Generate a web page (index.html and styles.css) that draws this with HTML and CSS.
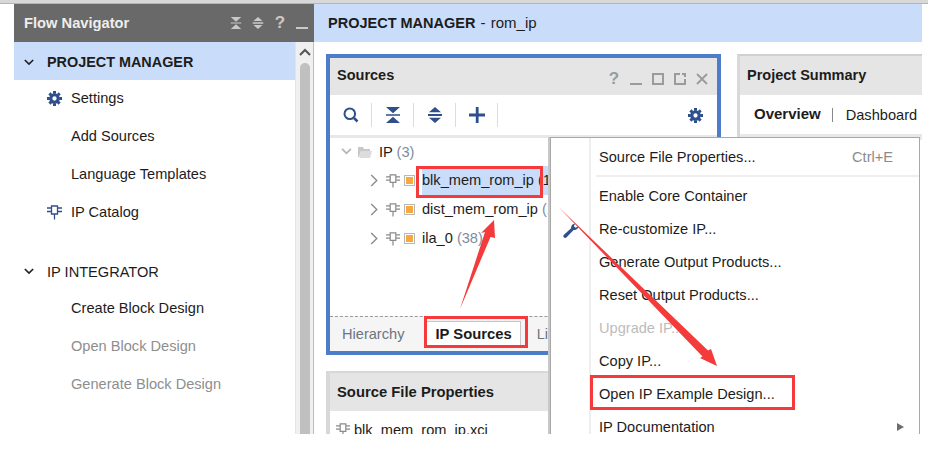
FILE: index.html
```html
<!DOCTYPE html>
<html lang="en">
<head>
    <meta charset="UTF-8">
    <title>PROJECT MANAGER - rom_ip</title>
    <link rel="stylesheet" href="styles.css">
</head>
<body>
    <!-- shared icons -->
    <svg class="defs" width="0" height="0">
        <symbol id="i-gear" viewBox="0 0 16 16">
            <g fill="currentColor">
                <path fill-rule="evenodd" d="M8 2.4a5.6 5.6 0 1 0 0 11.2 5.6 5.6 0 0 0 0-11.2zM8 5.7a2.3 2.3 0 1 1 0 4.6 2.3 2.3 0 0 1 0-4.6z"/>
                <path d="M6.4 0h3.2v3H6.4zM6.4 13h3.2v3H6.4zM0 6.4h3v3.2H0zM13 6.4h3v3.2h-3zM1.4 3.7l2.3-2.3 2 2-2.3 2.3zM10.3 12.6l2.3-2.3 2 2-2.3 2.3zM12.6 1.4l2 2.3-2 2-2.3-2.3zM3.4 10.3l2.3 2.3-2 2-2.3-2.3z"/>
            </g>
        </symbol>
        <symbol id="i-chip" viewBox="0 0 15 15">
            <g fill="none" stroke="currentColor" stroke-width="1.3">
                <path d="M4.5 1h6v8h-6zM0 3h4.500M0 6.500h4.500M10.500 3H15M10.500 6.500H15M7.500 9v5.500"/>
            </g>
        </symbol>
        <symbol id="i-collapse" viewBox="0 0 14 16">
            <path fill="currentColor" d="M0 0h14L7 6.200zM7 9.800l7 6.200H0zM0 6.900h14v.9H0zM0 8.200h14v.9H0z"/>
        </symbol>
        <symbol id="i-expand" viewBox="0 0 14 16">
            <path fill="currentColor" d="M7 0l6 5.200H1zM1 10.800h12L7 16zM0 6.900h14v2.200H0z"/>
        </symbol>
        <symbol id="i-chev-down" viewBox="0 0 12 8">
            <path fill="none" stroke="currentColor" stroke-width="2" d="M1 1l5 5 5-5"/>
        </symbol>
        <symbol id="i-chev-right" viewBox="0 0 8 14">
            <path fill="none" stroke="currentColor" stroke-width="1.500" d="M1 1l6 6-6 6"/>
        </symbol>
        <symbol id="i-min" viewBox="0 0 12 12">
            <path fill="currentColor" d="M0 10h12v2H0z"/>
        </symbol>
    </svg>

    <div class="top-line"></div>

    <div class="app">
        <!-- left flow navigator -->
        <aside class="nav">
            <div class="nav-head">
                <span class="nav-title">Flow Navigator</span>
                <span class="head-btn"><svg class="ic-12"><use href="#i-collapse"/></svg></span>
                <span class="head-btn"><svg class="ic-12"><use href="#i-expand"/></svg></span>
                <span class="head-btn q">?</span>
                <span class="head-btn"><svg class="ic-12"><use href="#i-min"/></svg></span>
            </div>
            <div class="nav-body">
                <div class="nav-list">
                    <div class="nav-section active">
                        <svg class="nav-chev"><use href="#i-chev-down"/></svg>
                        <span>PROJECT MANAGER</span>
                    </div>
                    <div class="nav-item first"><span class="nav-icon"><svg class="ic-15"><use href="#i-gear"/></svg></span>Settings</div>
                    <div class="nav-item"><span class="nav-icon"></span>Add Sources</div>
                    <div class="nav-item"><span class="nav-icon"></span>Language Templates</div>
                    <div class="nav-item"><span class="nav-icon"><svg class="ic-15"><use href="#i-chip"/></svg></span>IP Catalog</div>
                    <div class="nav-section second">
                        <svg class="nav-chev"><use href="#i-chev-down"/></svg>
                        <span>IP INTEGRATOR</span>
                    </div>
                    <div class="nav-item"><span class="nav-icon"></span>Create Block Design</div>
                    <div class="nav-item disabled"><span class="nav-icon"></span>Open Block Design</div>
                    <div class="nav-item disabled"><span class="nav-icon"></span>Generate Block Design</div>
                </div>
                <div class="scrollbar">
                    <svg class="scroll-up" width="12" height="8"><use href="#i-chev-down"/></svg>
                    <div class="scroll-thumb"></div>
                </div>
            </div>
        </aside>

        <main class="main">
            <div class="banner"><b>PROJECT MANAGER</b> - rom_ip</div>

            <div class="panels">
                <div class="left-col">
                    <section class="panel sources">
                        <div class="panel-head">
                            <span class="panel-title">Sources</span>
                            <span class="head-btn q">?</span>
                            <span class="head-btn"><svg class="ic-12"><use href="#i-min"/></svg></span>
                            <span class="head-btn"><span class="box-icon"></span></span>
                            <span class="head-btn">
                                <svg class="ic-12" viewBox="0 0 12 12"><path fill="none" stroke="currentColor" stroke-width="2" d="M6 1H1v10h10V6M8 1h3v3"/></svg>
                            </span>
                            <span class="head-btn">
                                <svg class="ic-12" viewBox="0 0 12 12"><path fill="none" stroke="currentColor" stroke-width="1.800" d="M1 1l10 10M11 1L1 11"/></svg>
                            </span>
                        </div>
                        <div class="toolbar">
                            <span class="tool">
                                <svg class="ic-16" viewBox="0 0 16 16"><path fill="none" stroke="currentColor" stroke-width="2" d="M6.800 1.500a5.300 5.300 0 1 0 0 10.600 5.300 5.300 0 0 0 0-10.600z"/><path fill="none" stroke="currentColor" stroke-width="2.500" d="M11 11l3.500 3.500"/></svg>
                            </span>
                            <span class="tool"><svg class="ic-16"><use href="#i-collapse"/></svg></span>
                            <span class="tool"><svg class="ic-16"><use href="#i-expand"/></svg></span>
                            <span class="tool">
                                <svg class="ic-16" viewBox="0 0 16 16"><path fill="currentColor" d="M6.800 0h2.800v6.600H16v2.800H9.600V16H6.800V9.400H0V6.600h6.800z"/></svg>
                            </span>
                            <span class="tool-right"><svg class="ic-15"><use href="#i-gear"/></svg></span>
                        </div>
                        <div class="tree">
                            <div class="tree-row root">
                                <svg class="tree-chev-down"><use href="#i-chev-down"/></svg>
                                <svg class="folder" viewBox="0 0 14 12"><path fill="#c8c8c8" d="M0 1h5l1 2h6v2H3L1 11H0z"/><path fill="#dcdcdc" d="M3 5h11l-2 7H1z"/></svg>
                                <span>IP <span class="count">(3)</span></span>
                            </div>
                            <div class="tree-row child">
                                <svg class="tree-chev"><use href="#i-chev-right"/></svg>
                                <svg class="chip"><use href="#i-chip"/></svg>
                                <span class="orange"></span>
                                <span class="tree-label selected">blk_mem_rom_ip <span class="count-dark">(13)</span></span>
                            </div>
                            <div class="tree-row child">
                                <svg class="tree-chev"><use href="#i-chev-right"/></svg>
                                <svg class="chip"><use href="#i-chip"/></svg>
                                <span class="orange"></span>
                                <span class="tree-label">dist_mem_rom_ip <span class="count">(20)</span></span>
                            </div>
                            <div class="tree-row child">
                                <svg class="tree-chev"><use href="#i-chev-right"/></svg>
                                <svg class="chip"><use href="#i-chip"/></svg>
                                <span class="orange"></span>
                                <span class="tree-label">ila_0 <span class="count">(38)</span></span>
                            </div>
                        </div>
                        <div class="tabs">
                            <span class="tab">Hierarchy</span>
                            <span class="tab current">IP Sources</span>
                            <span class="tab">Libraries</span>
                        </div>
                    </section>

                    <section class="panel props">
                        <div class="panel-head"><span class="panel-title">Source File Properties</span></div>
                        <div class="props-row">
                            <svg class="chip"><use href="#i-chip"/></svg>
                            <span>blk_mem_rom_ip.xci</span>
                        </div>
                    </section>
                </div>

                <section class="panel summary">
                    <div class="panel-head"><span class="panel-title">Project Summary</span></div>
                    <div class="summary-tabs">
                        <b class="overview">Overview</b>
                        <span class="summary-sep"></span>
                        <span>Dashboard</span>
                    </div>
                    <div class="summary-band"></div>
                </section>
            </div>
        </main>

        <!-- context menu sits over the panels -->
        <div class="menu">
            <div class="menu-row"><span class="menu-label">Source File Properties...</span><span class="shortcut">Ctrl+E</span></div>
            <div class="menu-sep"></div>
            <div class="menu-row"><span class="menu-label">Enable Core Container</span></div>
            <div class="menu-row">
                <svg class="wrench" viewBox="0 0 17 16"><path fill="#2f4f8c" d="M16.500 3.500c-.3 2.600-2.600 4.500-5.200 4L3.800 15.300c-.8.900-2.300.8-3-.1-.7-.8-.6-1.900.2-2.600L8.600 5.700C8.200 3 10.200.6 13 .5l-1.500 3 2 1.500z"/></svg>
                <span class="menu-label">Re-customize IP...</span>
            </div>
            <div class="menu-row"><span class="menu-label">Generate Output Products...</span></div>
            <div class="menu-row"><span class="menu-label">Reset Output Products...</span></div>
            <div class="menu-row off"><span class="menu-label">Upgrade IP...</span></div>
            <div class="menu-row"><span class="menu-label">Copy IP...</span></div>
            <div class="menu-row"><span class="menu-label">Open IP Example Design...</span></div>
            <div class="menu-row"><span class="menu-label">IP Documentation</span><span class="submenu"></span></div>
        </div>
    </div>

    <!-- red hand drawn marks on top of everything -->
    <svg class="marks" width="928" height="454" viewBox="0 0 928 454">
        <g fill="none" stroke="#f43a3a" stroke-width="3">
            <rect x="417.500" y="167.500" width="124" height="29"/>
            <rect x="425.500" y="317.500" width="101" height="29"/>
            <rect x="591.500" y="376.500" width="202" height="32"/>
        </g>
        <g fill="#f43a3a">
            <path d="M460 309L485 232L481 233L494 220L495 238L490.500 237z"/>
            <path d="M558 206.500L708 350.500L711 349L717 366L700 358L702.500 356.500z"/>
        </g>
    </svg>
</body>
</html>
```

FILE: styles.css
```css
body {
    margin: 0;
    background-color: white;
    font-family: "Liberation Sans", Arial, sans-serif;
    font-size: 14.600px;
    color: #1c1c1c;
    position: relative;
    height: 454px;
    overflow: hidden;
}

.defs {
    display: block;
    height: 0;
}

.top-line {
    height: 3px;
    background-color: #d8d8d8;
    border-bottom: 1px solid #b4b4b4;
}

.app {
    display: flex;
    width: 908px;
    height: 430px;
    margin-left: 14px;
    overflow: hidden;
    position: relative;
}

.ic-12 {
    width: 12px;
    height: 12px;
}

.ic-15 {
    width: 15px;
    height: 15px;
}

.ic-16 {
    width: 16px;
    height: 16px;
}

.head-btn {
    width: 22px;
    display: flex;
    align-items: center;
    justify-content: center;
    flex: none;
}

.head-btn.q {
    font-size: 17px;
    font-weight: bold;
}

/* flow navigator */
.nav {
    width: 300px;
    flex: none;
    display: flex;
    flex-direction: column;
}

.nav-head {
    height: 38px;
    background-color: #696969;
    color: #c9c9c9;
    display: flex;
    align-items: center;
    padding: 0 1px 0 10px;
    flex: none;
}

.nav-title {
    flex: 1;
    font-weight: bold;
    font-size: 14.700px;
    color: #eeeeee;
}

.nav-body {
    flex: 1;
    display: flex;
    min-height: 0;
}

.nav-list {
    flex: 1;
}

.nav-section {
    height: 35px;
    display: flex;
    align-items: center;
    padding-left: 10px;
}

.nav-section.active {
    box-sizing: border-box;
    height: 38px;
    padding-top: 2px;
    background-color: #c9ddfb;
    font-weight: bold;
    font-size: 14.400px;
}

.nav-section.second {
    margin-top: 23px;
}

.nav-chev {
    width: 10px;
    height: 7px;
    margin-right: 13px;
    color: #222;
}

.nav-item {
    height: 38px;
    display: flex;
    align-items: center;
    padding-left: 33px;
}

.nav-item.first {
    margin-top: -1px;
}

.nav-item.disabled {
    color: #8e8e8e;
}

.nav-icon {
    width: 24px;
    display: flex;
    align-items: center;
    color: #2f4f8c;
}

.scrollbar {
    width: 17px;
    flex: none;
    background-color: #f0f0f0;
    border-left: 1px solid #e4e4e4;
    border-right: 1px solid #bdbdbd;
    box-sizing: content-box;
    display: flex;
    flex-direction: column;
    align-items: center;
}

.scroll-up {
    margin-top: 6px;
    transform: rotate(180deg);
    color: #555;
}

.scroll-thumb {
    width: 10px;
    flex: 1;
    margin-top: 7px;
    background-color: #c0c0c0;
    border-radius: 5px 5px 0 0;
}

/* main area */
.main {
    flex: 1;
    min-width: 0;
}

.banner {
    height: 38px;
    line-height: 37px;
    background-color: #c9ddfb;
    padding-left: 14px;
    font-size: 15px;
    word-spacing: 1px;
}

.banner b {
    font-size: 14.500px;
    word-spacing: 0;
}

.panels {
    display: flex;
    gap: 16px;
    padding: 12px 0 0 12px;
}

.left-col {
    width: 395px;
    flex: none;
}

.panel {
    box-sizing: border-box;
    background-color: white;
}

.panel-head {
    height: 37px;
    background-color: #e5e5e5;
    display: flex;
    align-items: center;
    color: #9b9b9b;
    padding-right: 4px;
}

.panel-title {
    flex: 1;
    padding-left: 7px;
    font-weight: bold;
    font-size: 14.500px;
    color: #1c1c1c;
}

.sources .panel-title {
    padding-bottom: 3px;
}

.sources .head-btn {
    margin-top: 5px;
}

.box-icon {
    width: 8px;
    height: 8px;
    border: 2px solid #9b9b9b;
}

.sources {
    height: 301px;
    border: 4px solid #4d7cc9;
    display: flex;
    flex-direction: column;
}

.toolbar {
    height: 40px;
    display: flex;
    align-items: center;
    color: #2f4f8c;
    border-bottom: 3px solid #e8e8e8;
    flex: none;
}

.tool {
    box-sizing: border-box;
    width: 42px;
    height: 24px;
    display: flex;
    align-items: center;
    justify-content: center;
    border-right: 1px solid #dcdcdc;
}

.tool-right {
    margin-left: auto;
    margin-right: 14px;
    display: flex;
}

.tree {
    flex: 1;
    margin-top: -1px;
}

.tree-row {
    height: 29px;
    display: flex;
    align-items: center;
    white-space: nowrap;
}

.tree-row.root {
    padding-left: 11px;
}

.tree-row.child {
    padding-left: 40px;
}

.tree-chev-down {
    width: 11px;
    height: 7px;
    color: #b4b4b4;
    margin-right: 6px;
}

.folder {
    width: 14px;
    height: 12px;
    margin-right: 7px;
}

.tree-chev {
    width: 8px;
    height: 13px;
    color: #8c8c8c;
    margin-right: 8px;
}

.chip {
    width: 14px;
    height: 14px;
    color: #8a8a8a;
    flex: none;
}

.orange {
    box-sizing: border-box;
    width: 11px;
    height: 11px;
    margin-left: 4px;
    margin-right: 7px;
    background-color: #f8a83c;
    border: 1px solid #b8b8b8;
    outline: 1px solid white;
    outline-offset: -2px;
    flex: none;
}

.tree-label {
    height: 29px;
    line-height: 29px;
}

.tree-label.selected {
    background-color: #c9ddfb;
    width: 135px;
}

.count {
    color: #7e8b9e;
}

.count-dark {
    color: #1c1c1c;
}

.tabs {
    height: 34px;
    flex: none;
    display: flex;
    align-items: center;
    background-color: #f5f5f5;
    border-top: 1px dashed #9a9a9a;
    padding-left: 4px;
    color: #6e7480;
    gap: 2px;
}

.tab {
    padding: 0 8px;
    height: 26px;
    line-height: 26px;
    box-sizing: border-box;
}

.tab.current {
    background-color: white;
    border: 1px solid #c8c8c8;
    border-bottom-width: 2px;
    color: #1c1c1c;
    font-weight: bold;
    font-size: 14.800px;
    line-height: 24px;
    margin-left: 12px;
    margin-right: 6px;
}

.props {
    margin-top: 16px;
    border: 4px solid #d8d8d8;
    border-top-width: 2px;
    border-bottom: none;
    height: 80px;
}

.props .panel-head {
    height: 38px;
}

.props .panel-title {
    font-size: 14.800px;
}

.props-row {
    display: flex;
    align-items: center;
    gap: 4px;
    height: 38px;
    padding-left: 6px;
}

.summary {
    flex: 1;
    min-width: 0;
    border-left: 3px solid #d8d8d8;
    border-top: 2px solid #d0d0d0;
}

.summary .panel-head {
    height: 39px;
}

.summary .panel-title {
    padding-bottom: 2px;
}

.summary-tabs {
    height: 39px;
    display: flex;
    align-items: center;
    padding-left: 14px;
    white-space: nowrap;
}

.overview {
    font-size: 15px;
    margin-bottom: 3px;
}

.summary-sep {
    width: 1px;
    height: 14px;
    background-color: #888;
    margin: 0 13px 0 11px;
}

.summary-band {
    height: 6px;
    background-color: #e8e8e8;
}

/* context menu */
.menu {
    position: absolute;
    left: 536px;
    top: 133px;
    width: 370px;
    height: 320px;
    box-sizing: border-box;
    padding-top: 2px;
    border: 1px solid #a8a8a8;
    box-shadow: -2px 0 0 #c8c8c8;
    background: linear-gradient(to right, white 38px, #eeeeee 38px, #eeeeee 40px, white 40px);
}

.menu-row {
    height: 33px;
    display: flex;
    align-items: center;
    padding-left: 48px;
    padding-right: 15px;
    position: relative;
}

.menu-row.off {
    color: #bcbcbc;
}

.menu-label {
    flex: 1;
}

.shortcut {
    color: #8c8c8c;
    margin-right: 11px;
}

.menu-sep {
    height: 2px;
    margin: 2px 0 2px 45px;
    background-color: #eeeeee;
}

.wrench {
    position: absolute;
    left: 12px;
    top: 11px;
    width: 16px;
    height: 15px;
}

.submenu {
    width: 0;
    height: 0;
    border-left: 7px solid #6e6e6e;
    border-top: 4px solid transparent;
    border-bottom: 4px solid transparent;
}

.marks {
    position: absolute;
    left: 0;
    top: 0;
}
```
